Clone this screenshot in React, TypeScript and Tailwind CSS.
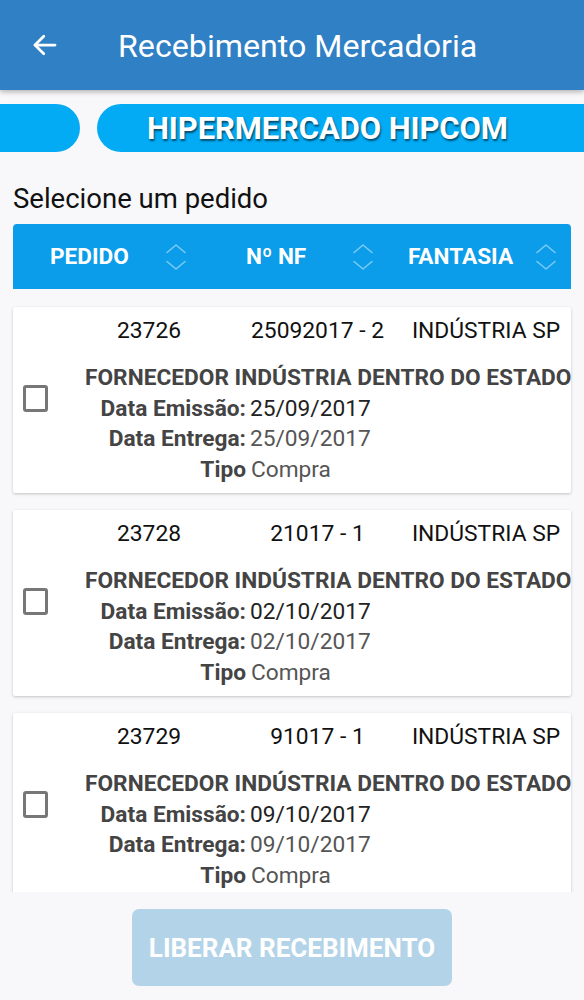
import React from "react";

const pedidos = [
  { pedido: "23726", nf: "25092017 - 2", fantasia: "INDÚSTRIA SP", emissao: "25/09/2017", entrega: "25/09/2017" },
  { pedido: "23728", nf: "21017 - 1", fantasia: "INDÚSTRIA SP", emissao: "02/10/2017", entrega: "02/10/2017" },
  { pedido: "23729", nf: "91017 - 1", fantasia: "INDÚSTRIA SP", emissao: "09/10/2017", entrega: "09/10/2017" },
];

function SortIcon() {
  return (
    <svg width="22" height="28" viewBox="0 0 22 28" fill="none" stroke="#7ccaf6" strokeWidth="1.6" strokeLinecap="round" strokeLinejoin="round">
      <polyline points="2,9.5 11,2 20,9.5" />
      <polyline points="2,18.5 11,26 20,18.5" />
    </svg>
  );
}

function Card({ p }: { p: (typeof pedidos)[number] }) {
  return (
    <div className="bg-white rounded-[2px] shadow-[0_1px_3px_rgba(0,0,0,0.22)] h-[186px] shrink-0 flex flex-col pt-[9px] overflow-hidden">
      <div className="flex pl-[52px] h-[30px] text-[22.8px] leading-[30px] text-[#111]">
        <div className="w-[168px] text-center">{p.pedido}</div>
        <div className="w-[169px] text-center whitespace-nowrap">{p.nf}</div>
        <div className="w-[168px] text-center whitespace-nowrap">{p.fantasia}</div>
      </div>
      <div className="flex mt-[17px]">
        <div className="w-[72px] shrink-0">
          <div className="ml-[10px] mt-[22px] w-[25px] h-[27px] border-[3px] border-[#777] rounded-[3px]" />
        </div>
        <div className="flex flex-col text-[22.7px] leading-[30.5px]">
          <div className="font-bold text-[#444] whitespace-nowrap">FORNECEDOR INDÚSTRIA DENTRO DO ESTADO</div>
          <div className="flex whitespace-nowrap">
            <span className="w-[161px] text-right font-bold text-[#444]">Data Emissão:</span>
            <span className="ml-[4px] text-[#222]">{p.emissao}</span>
          </div>
          <div className="flex whitespace-nowrap">
            <span className="w-[161px] text-right font-bold text-[#444]">Data Entrega:</span>
            <span className="ml-[4px] text-[#555]">{p.entrega}</span>
          </div>
          <div className="flex whitespace-nowrap">
            <span className="w-[161px] text-right font-bold text-[#444]">Tipo</span>
            <span className="ml-[5px] text-[#555]">Compra</span>
          </div>
        </div>
      </div>
    </div>
  );
}

export default function App() {
  return (
    <div className="w-[584px] h-[1000px] bg-[#f8f8fa] flex flex-col overflow-hidden" style={{ fontFamily: "Roboto, 'Noto Sans', sans-serif" }}>
      <div className="h-[90px] shrink-0 bg-[#2f80c4] flex items-center shadow-[0_2px_5px_rgba(0,0,0,0.28)] relative z-10">
        <div className="w-[118px] flex items-center pl-[30px]">
          <svg width="30" height="30" viewBox="0 0 24 24" fill="none" stroke="white" strokeWidth="2.2" strokeLinecap="round" strokeLinejoin="round">
            <path d="M20 12H4" />
            <path d="M11 5l-7 7 7 7" />
          </svg>
        </div>
        <div className="text-white text-[32.2px] leading-none pt-[3px]">Recebimento Mercadoria</div>
      </div>

      <div className="flex mt-[14px] h-[48px] shrink-0 gap-[17px]">
        <div className="w-[80px] bg-[#03abf5] rounded-r-[24px]" />
        <div className="flex-1 bg-[#03abf5] rounded-l-[24px] flex items-center pl-[50px]">
          <span className="text-white font-bold text-[31px] leading-none tracking-[-0.1px] [text-shadow:1px_2px_2px_rgba(0,0,0,0.55)]">HIPERMERCADO HIPCOM</span>
        </div>
      </div>

      <div className="mt-[32px] px-[13px] text-[27.5px] leading-[30px] text-[#111]">Selecione um pedido</div>

      <div className="mx-[13px] mt-[10px] h-[65px] shrink-0 bg-[#0b9cea] rounded-t-[4px] flex items-center text-white font-bold text-[22.6px]">
        <div className="w-[37px]" />
        <span className="w-[115px]">PEDIDO</span>
        <SortIcon />
        <div className="w-[59px]" />
        <span className="w-[106px]">Nº NF</span>
        <SortIcon />
        <div className="w-[34px]" />
        <span className="w-[127px]">FANTASIA</span>
        <SortIcon />
      </div>

      <div className="h-[603px] shrink-0 overflow-hidden px-[13px] pt-[18px] flex flex-col gap-[17px]">
        {pedidos.map((p) => (
          <Card key={p.pedido} p={p} />
        ))}
      </div>

      <div className="flex justify-center pt-[17px]">
        <div className="w-[320px] h-[77px] rounded-[7px] bg-[#b3d3e8] flex items-center justify-center">
          <span className="text-white font-bold text-[26px] leading-none">LIBERAR RECEBIMENTO</span>
        </div>
      </div>
    </div>
  );
}
